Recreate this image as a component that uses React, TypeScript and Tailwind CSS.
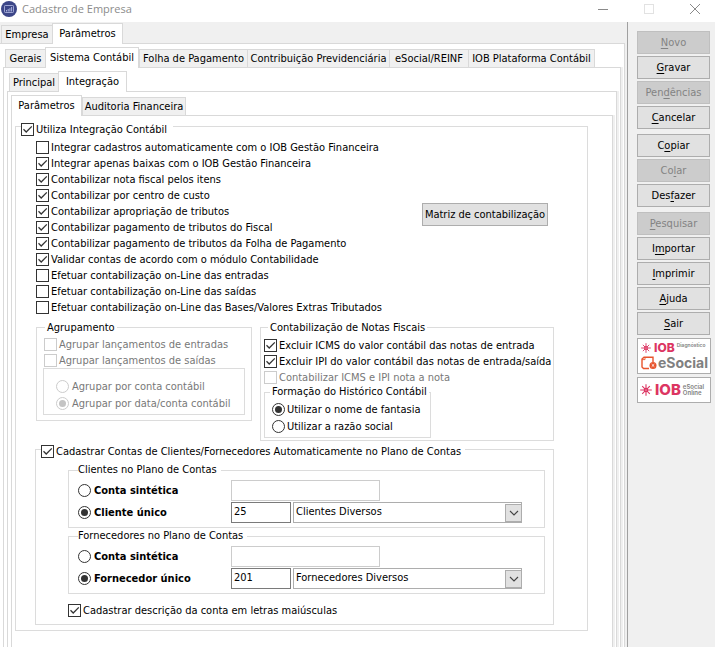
import React, { useId } from 'react';
import clsx from 'clsx';

const mainOptions = [
    { label: 'Integrar cadastros automaticamente com o IOB Gestão Financeira', checked: false },
    { label: 'Integrar apenas baixas com o IOB Gestão Financeira', checked: true },
    { label: 'Contabilizar nota fiscal pelos itens', checked: true },
    { label: 'Contabilizar por centro de custo', checked: true },
    { label: 'Contabilizar apropriação de tributos', checked: true },
    { label: 'Contabilizar pagamento de tributos do Fiscal', checked: true },
    { label: 'Contabilizar pagamento de tributos da Folha de Pagamento', checked: true },
    { label: 'Validar contas de acordo com o módulo Contabilidade', checked: true },
    { label: 'Efetuar contabilização on-Line das entradas', checked: false },
    { label: 'Efetuar contabilização on-Line das saídas', checked: false },
    { label: 'Efetuar contabilização on-Line das Bases/Valores Extras Tributados', checked: false },
];

const windowTabs = [
    { label: 'Empresa', width: 'w-[51px]' },
    { label: 'Parâmetros', width: 'w-[71px]' },
];

const moduleTabs = [
    { label: 'Gerais', width: 'w-10' },
    { label: 'Sistema Contábil', width: 'w-[94px]' },
    { label: 'Folha de Pagamento', width: 'w-[108px]' },
    { label: 'Contribuição Previdenciária', width: 'w-[142px]' },
    { label: 'eSocial/REINF', width: 'w-[79px]' },
    { label: 'IOB Plataforma Contábil', width: 'w-[127px]' },
];

const sectionTabs = [
    { label: 'Principal', width: 'w-[49px]' },
    { label: 'Integração', width: 'w-[69px]' },
];

const integrationTabs = [
    { label: 'Parâmetros', width: 'w-[71px]' },
    { label: 'Auditoria Financeira', width: 'w-[104px]' },
];

// "&" goes before the access key letter
const actionGroups = [
    [
        { label: '&Novo', disabled: true },
        { label: '&Gravar' },
        { label: 'Pen&dências', disabled: true },
        { label: '&Cancelar' },
    ],
    [
        { label: 'C&opiar' },
        { label: 'Co&lar', disabled: true },
        { label: 'Des&fazer' },
    ],
    [
        { label: '&Pesquisar', disabled: true },
        { label: 'I&mportar' },
        { label: '&Imprimir' },
        { label: '&Ajuda' },
        { label: '&Sair' },
    ],
];

interface CheckProps {
    label: string;
    checked?: boolean;
    disabled?: boolean;
    compact?: boolean;
    className?: string;
}

const Check = ({ label, checked, disabled, compact, className }: CheckProps) => (
    <label
        className={clsx(
            'flex items-center gap-0.5 whitespace-nowrap',
            compact ? 'h-[13px]' : 'h-4',
            disabled && 'text-[#787878]',
            className
        )}
    >
        <span className="relative size-[13px] shrink-0">
            <input
                type="checkbox"
                defaultChecked={checked}
                disabled={disabled}
                className="peer block size-[13px] appearance-none border border-[#333] bg-white disabled:border-[#ccc]"
            />
            <svg
                viewBox="0 0 13 13"
                className="pointer-events-none absolute inset-0 hidden size-[13px] peer-checked:block"
            >
                <path d="M2.5 6.3 L5.2 9 L10.8 3.4" fill="none" stroke="#333" strokeWidth="1.3" />
            </svg>
        </span>
        {label}
    </label>
);

interface RadioProps {
    label: string;
    name: string;
    checked?: boolean;
    disabled?: boolean;
    className?: string;
}

const Radio = ({ label, name, checked, disabled, className }: RadioProps) => (
    <label className={clsx('flex items-center whitespace-nowrap', disabled && 'text-[#787878]', className)}>
        <span className="relative size-[13px] shrink-0">
            <input
                type="radio"
                name={name}
                defaultChecked={checked}
                disabled={disabled}
                className="peer block size-[13px] appearance-none rounded-full border border-[#333] bg-white disabled:border-[#ccc]"
            />
            <span
                className={clsx(
                    'pointer-events-none absolute inset-[3px] hidden rounded-full peer-checked:block',
                    disabled ? 'bg-[#c4c4c4]' : 'bg-[#333]'
                )}
            />
        </span>
        {label}
    </label>
);

interface TabsProps {
    tabs: { label: string; width: string }[];
    active: string;
    className?: string;
}

const Tabs = ({ tabs, active, className }: TabsProps) => (
    <div role="tablist" className={clsx('flex h-5 items-end', className)}>
        {tabs.map(({ label, width }) => (
            <button
                key={label}
                type="button"
                role="tab"
                aria-selected={label === active}
                className={clsx(
                    'whitespace-nowrap border-t border-[#d9d9d9]',
                    width,
                    label === active
                        ? 'relative -mb-px h-[21px] border-x bg-white pb-0.5'
                        : 'h-[18px] border-l bg-[#f0f0f0] last:border-r'
                )}
            >
                {label}
            </button>
        ))}
    </div>
);

interface PanelProps {
    children: React.ReactNode;
    className?: string;
}

const Panel = ({ children, className }: PanelProps) => (
    <div
        className={clsx(
            'flex flex-1 flex-col border-t border-r border-[#d9d9d9] bg-white pl-[3px] shadow-[2px_0_0_#f0f0f0]',
            className
        )}
    >
        {children}
    </div>
);

interface AccountGroupProps {
    title: string;
    option: string;
    code: string;
    account: string;
}

const AccountGroup = ({ title, option, code, account }: AccountGroupProps) => {
    const name = useId();

    return (
        <fieldset className="mr-2 ml-8 border border-[#dcdcdc] pr-[22px] pb-1 pl-[9px]">
            <legend className="pr-1 leading-4">{title}</legend>
            <div className="grid grid-cols-[153px_1fr] items-center gap-y-px pt-0.5">
                <Radio label="Conta sintética" name={name} className="gap-[3px] font-bold" />
                <input
                    type="text"
                    disabled
                    aria-label={`${title}: conta sintética`}
                    className="h-[21px] w-[149px] border border-[#ccc] bg-white px-0.5"
                />
                <Radio label={option} name={name} checked className="gap-[3px] font-bold" />
                <div className="flex gap-0.5">
                    <input
                        type="text"
                        defaultValue={code}
                        aria-label={`${title}: código`}
                        className="h-[21px] w-[60px] border border-[#7a7a7a] bg-white px-0.5 pb-0.5"
                    />
                    <div className="relative flex-1">
                        <select
                            aria-label={`${title}: conta`}
                            className="block h-[21px] w-full appearance-none border border-[#adadad] bg-white px-0.5 pb-0.5"
                        >
                            <option>{account}</option>
                        </select>
                        <span className="pointer-events-none absolute top-0.5 right-0 flex h-[18px] w-[17px] items-center justify-center border border-[#adadad] bg-[#e1e1e1]">
                            <svg viewBox="0 0 10 6" className="h-1.5 w-2.5">
                                <path d="M1 1 L5 5 L9 1" fill="none" stroke="#444" strokeWidth="1.1" />
                            </svg>
                        </span>
                    </div>
                </div>
            </div>
        </fieldset>
    );
};

const ActionButton = ({ label, disabled }: { label: string; disabled?: boolean }) => {
    const [before, after] = label.split('&');

    return (
        <button
            type="button"
            disabled={disabled}
            className="h-[23px] w-full border border-[#adadad] bg-[#e1e1e1] disabled:border-[#bfbfbf] disabled:bg-[#ccc] disabled:text-[#838383]"
        >
            {before}
            <span className="underline underline-offset-2">{after[0]}</span>
            {after.slice(1)}
        </button>
    );
};

const Star = ({ className }: { className?: string }) => (
    <svg viewBox="0 0 12 12" className={className}>
        <g stroke="#dc3562" strokeWidth="1.1">
            <path d="M6 0.2 V11.8 M0.2 6 H11.8" />
            <path d="M2.2 2.2 L9.8 9.8 M9.8 2.2 L2.2 9.8" />
        </g>
        <circle cx="6" cy="6" r="2.3" fill="#dc3562" />
        <circle cx="6" cy="6" r="0.6" fill="#fff" />
    </svg>
);

export default function App() {
    return (
        <div className="flex min-h-screen flex-col bg-white font-['DejaVu_Sans_Condensed','DejaVu_Sans',sans-serif] text-[11px] leading-[13px] text-black">
            <header className="flex h-[22px] items-start justify-between">
                <div className="flex items-center gap-[5px] pl-px">
                    <svg viewBox="0 0 16 16" className="size-4">
                        <circle cx="8" cy="8" r="8" fill="#3c4688" />
                        <rect x="3.5" y="4.5" width="9" height="7" rx="0.8" fill="none" stroke="#b9bfe6" strokeWidth="0.8" />
                        <path d="M5.5 10.5 V9 M7.2 10.5 V8 M8.9 10.5 V7.2 M10.6 10.5 V6" stroke="#b9bfe6" strokeWidth="0.9" />
                    </svg>
                    <h1 className="font-['Open_Sans',sans-serif] leading-[18px] text-[#8c8c8c]">Cadastro de Empresa</h1>
                </div>
                <div className="flex h-[18px] items-center gap-[34px] pr-[14px]">
                    <button type="button" aria-label="Minimizar">
                        <svg viewBox="0 0 12 12" className="size-3">
                            <path d="M1 6.5 H11" stroke="#8a8a8a" />
                        </svg>
                    </button>
                    <button type="button" aria-label="Maximizar" disabled>
                        <svg viewBox="0 0 12 12" className="size-3">
                            <rect x="1.5" y="1.5" width="9" height="9" fill="none" stroke="#e2e2e2" />
                        </svg>
                    </button>
                    <button type="button" aria-label="Fechar">
                        <svg viewBox="0 0 12 12" className="size-3">
                            <path d="M1 1 L11 11 M11 1 L1 11" stroke="#8a8a8a" />
                        </svg>
                    </button>
                </div>
            </header>

            <div className="flex flex-1">
                <main className="flex flex-1 flex-col bg-[#f0f0f0] pt-px pr-0.5">
                    <Tabs tabs={windowTabs} active="Parâmetros" className="pl-px" />
                    <Panel className="pt-[3px] pr-[3px]">
                        <Tabs tabs={moduleTabs} active="Sistema Contábil" className="pl-0.5" />
                        <Panel className="border-l pt-[3px] pr-[3px]">
                            <Tabs tabs={sectionTabs} active="Integração" className="pl-0.5" />
                            <Panel className="border-l pt-[3px] pr-[3px]">
                                <Tabs tabs={integrationTabs} active="Parâmetros" />
                                <Panel className="border-l pr-6">
                                    <fieldset className="border border-[#dcdcdc] pr-[33px] pb-[5px] pl-[19px]">
                                        <legend className="-ml-[14px] pt-[7px] pr-1.5">
                                            <Check label="Utiliza Integração Contábil" checked compact />
                                        </legend>

                                        <div className="flex items-start pt-[3px] pl-px">
                                            <div className="w-[386px] shrink-0">
                                                {mainOptions.map((option) => (
                                                    <Check key={option.label} {...option} />
                                                ))}
                                            </div>
                                            <button
                                                type="button"
                                                className="mt-16 h-[23px] w-[126px] border border-[#adadad] bg-[#e1e1e1] whitespace-nowrap"
                                            >
                                                Matriz de contabilização
                                            </button>
                                        </div>

                                        <div className="mt-1 flex items-start gap-2 pl-px">
                                            <fieldset className="w-[216px] border border-[#dcdcdc] px-[6px] pb-[5px]">
                                                <legend className="ml-0.5 px-0.5 pt-px leading-4">Agrupamento</legend>
                                                <Check label="Agrupar lançamentos de entradas" disabled className="pl-px" />
                                                <Check label="Agrupar lançamentos de saídas" disabled className="pl-px" />
                                                <div className="flex flex-col gap-1 border border-[#dcdcdc] pt-[11px] pb-1 pl-3">
                                                    <Radio label="Agrupar por conta contábil" name="agrupar" disabled className="gap-[3px]" />
                                                    <Radio label="Agrupar por data/conta contábil" name="agrupar" checked disabled className="gap-[3px]" />
                                                </div>
                                            </fieldset>
                                            <fieldset className="flex-1 border border-[#dcdcdc] pb-0.5 pl-[3px]">
                                                <legend className="ml-1 px-0.5 pt-px leading-4">Contabilização de Notas Fiscais</legend>
                                                <div className="pt-px">
                                                    <Check label="Excluir ICMS do valor contábil das notas de entrada" checked />
                                                    <Check label="Excluir IPI do valor contábil das notas de entrada/saída" checked />
                                                    <Check label="Contabilizar ICMS e IPI nota a nota" disabled />
                                                </div>
                                                <fieldset className="w-[167px] border border-[#dcdcdc] pb-1 pl-[5px]">
                                                    <legend className="px-0.5 leading-[14px] whitespace-nowrap">
                                                        Formação do Histórico Contábil
                                                    </legend>
                                                    <div className="flex flex-col gap-1 pt-1 pl-0.5">
                                                        <Radio label="Utilizar o nome de fantasia" name="historico" checked className="gap-0.5" />
                                                        <Radio label="Utilizar a razão social" name="historico" className="gap-0.5" />
                                                    </div>
                                                </fieldset>
                                            </fieldset>
                                        </div>

                                        <fieldset className="border border-[#dcdcdc] pb-1.5">
                                            <legend className="ml-[5px] pt-1 pr-1">
                                                <Check
                                                    label="Cadastrar Contas de Clientes/Fornecedores Automaticamente no Plano de Contas"
                                                    checked
                                                    compact
                                                />
                                            </legend>
                                            <div className="pt-1">
                                                <AccountGroup title="Clientes no Plano de Contas" option="Cliente único" code="25" account="Clientes Diversos" />
                                                <AccountGroup title="Fornecedores no Plano de Contas" option="Fornecedor único" code="201" account="Fornecedores Diversos" />
                                            </div>
                                            <Check
                                                label="Cadastrar descrição da conta em letras maiúsculas"
                                                checked
                                                className="mt-2 ml-8"
                                            />
                                        </fieldset>
                                    </fieldset>
                                </Panel>
                            </Panel>
                        </Panel>
                    </Panel>
                </main>

                <aside className="flex w-[88px] shrink-0 flex-col gap-[3px] border-l border-[#a0a0a0] bg-[#f0f0f0] pt-[9px] pr-1 pl-[9px]">
                    <div className="flex flex-col gap-[5px] pr-px">
                        {actionGroups.map((group, i) => (
                            <div key={i} className="flex flex-col gap-0.5">
                                {group.map((action) => (
                                    <ActionButton key={action.label} {...action} />
                                ))}
                            </div>
                        ))}
                    </div>
                    <a href="#diagnostico" className="block h-9 border border-[#adadad] bg-white px-[3px] pt-[3px] font-[Inter,sans-serif] text-[#808080]">
                        <span className="flex h-3 items-center">
                            <Star className="size-2.5 shrink-0" />
                            <span className="ml-[3px] text-[12px] leading-3 font-extrabold text-[#dc3562]">IOB</span>
                            <span className="ml-0.5 self-start text-[5px] leading-[6px] font-semibold">Diagnóstico</span>
                        </span>
                        <span className="flex h-[18px] items-center">
                            <svg viewBox="0 0 16 14" className="h-3.5 w-4 shrink-0">
                                <path d="M8 12.5 H2.5 L1 11 V3 L3 1.2 H12 V6" fill="none" stroke="#e8552d" strokeWidth="1.4" />
                                <path d="M4 1.2 V3.6 H1" fill="none" stroke="#e8552d" strokeWidth="0.9" />
                                <circle cx="12" cy="9.4" r="3.5" fill="#e8552d" />
                                <path d="M10.7 8.1 L13.3 10.7 M13.3 8.1 L10.7 10.7" stroke="#fff" strokeWidth="0.9" />
                            </svg>
                            <span className="ml-px text-[14px] leading-4 font-bold">eSocial</span>
                        </span>
                    </a>
                    <a href="#esocial-online" className="flex h-[26px] items-center border border-[#adadad] bg-white pl-0.5 font-[Inter,sans-serif] text-[#808080]">
                        <Star className="size-3 shrink-0" />
                        <span className="ml-[3px] text-[15px] leading-4 font-extrabold text-[#dc3562]">IOB</span>
                        <span className="ml-0.5 text-[6px] leading-[6px] font-semibold">
                            eSocial
                            <br />
                            Online
                        </span>
                    </a>
                </aside>
            </div>
        </div>
    );
}
